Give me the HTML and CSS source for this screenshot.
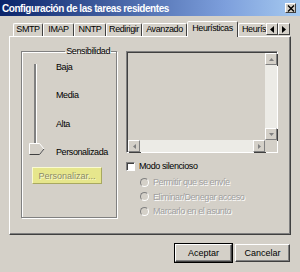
FILE: index.html
```html
<!DOCTYPE html>
<html lang="es">
  <head>
    <meta charset="UTF-8" />
    <title>Configuración de las tareas residentes</title>
    <link rel="stylesheet" href="styles.css">
  </head>
  <body>
    <div class="window">
      <div class="titlebar">
        <span class="title">Configuración de las tareas residentes</span>
        <span class="close">
          <svg width="8" height="7" viewBox="0 0 8 7"><path d="M1 0.5l6 6M7 0.5l-6 6" stroke="#000" stroke-width="1.4"/></svg>
        </span>
      </div>

      <div class="tabs">
        <div class="tab w30">SMTP</div>
        <div class="tab w31">IMAP</div>
        <div class="tab w32">NNTP</div>
        <div class="tab w36">Redirigir</div>
        <div class="tab w45">Avanzado</div>
        <div class="tab active">Heurísticas</div>
        <div class="tab clipped">Heurísticas</div>
        <div class="tab-arrows">
          <span class="arrow-btn"><svg width="4" height="7" viewBox="0 0 4 7"><path d="M4 0v7L0 3.5z" fill="#000"/></svg></span>
          <span class="arrow-btn"><svg width="4" height="7" viewBox="0 0 4 7"><path d="M0 0v7l4-3.5z" fill="#000"/></svg></span>
        </div>
      </div>

      <div class="panel">
        <fieldset class="group">
          <legend>Sensibilidad</legend>
          <div class="slider-row">
            <svg class="slider" width="24" height="92" viewBox="0 0 24 92">
              <rect x="5" y="0" width="2" height="82" fill="#808080"/>
              <rect x="7" y="0" width="1" height="82" fill="#fff"/>
              <path d="M0.5 79.5h10l4.5 5.5-4.5 5.5h-10z" fill="#d4d0c8" stroke="#fff"/>
              <path d="M0.5 90.5h10l4.5-5.5" fill="none" stroke="#404040"/>
            </svg>
            <div class="levels">
              <span>Baja</span>
              <span>Media</span>
              <span>Alta</span>
              <span>Personalizada</span>
            </div>
          </div>
          <button class="custom-btn">Personalizar...</button>
        </fieldset>

        <div class="right">
          <div class="listbox">
            <div class="list-body">
              <div class="list-area"></div>
              <div class="vscroll">
                <span class="sb-btn"><svg width="5" height="3" viewBox="0 0 5 3"><path d="M0 3h5L2.5 0z" fill="#808080"/></svg></span>
                <span class="sb-track"></span>
                <span class="sb-btn"><svg width="5" height="3" viewBox="0 0 5 3"><path d="M0 0h5L2.5 3z" fill="#808080"/></svg></span>
              </div>
            </div>
            <div class="hscroll">
              <span class="sb-btn"><svg width="3" height="5" viewBox="0 0 3 5"><path d="M3 0v5L0 2.5z" fill="#808080"/></svg></span>
              <span class="sb-track"></span>
              <span class="sb-btn"><svg width="3" height="5" viewBox="0 0 3 5"><path d="M0 0v5l3-2.5z" fill="#808080"/></svg></span>
              <span class="corner"></span>
            </div>
          </div>

          <label class="check-row">
            <span class="checkbox"></span>
            Modo silencioso
          </label>
          <div class="radios">
            <div class="radio-row"><span class="radio"></span>Permitir que se envíe</div>
            <div class="radio-row"><span class="radio"></span>Eliminar/Denegar acceso</div>
            <div class="radio-row"><span class="radio"></span>Marcarlo en el asunto</div>
          </div>
        </div>
      </div>

      <div class="footer">
        <button class="btn default">Aceptar</button>
        <button class="btn">Cancelar</button>
      </div>
    </div>
  </body>
</html>
```

FILE: styles.css
```css
* {
  margin: 0;
  padding: 0;
  box-sizing: border-box;
}
body {
  font-family: "Liberation Sans", Arial, sans-serif;
  font-size: 9px;
  letter-spacing: -0.4px;
  color: #000;
  background-color: #d4d0c8;
}
.window {
  width: 300px;
  height: 272px;
  background-color: #d4d0c8;
  overflow: hidden;
}
.titlebar {
  height: 16px;
  display: flex;
  align-items: center;
  justify-content: space-between;
  padding: 0 4px 0 2px;
  background: linear-gradient(90deg, #0a246a, #7d9fdc 75%, #a6caf0);
}
.title {
  color: #fff;
  font-weight: bold;
  font-size: 10px;
  letter-spacing: -0.45px;
}
.close {
  width: 11px;
  height: 10px;
  display: flex;
  align-items: center;
  justify-content: center;
  background-color: #d4d0c8;
  border: 1px solid;
  border-color: #fff #404040 #404040 #fff;
}

/* pestañas */
.tabs {
  height: 20px;
  padding-left: 13px;
  display: flex;
  align-items: flex-end;
  position: relative;
  z-index: 1;
}
.tab {
  height: 13px;
  line-height: 11px;
  text-align: center;
  border: 1px solid;
  border-bottom: none;
  border-color: #fff #404040 transparent #fff;
  border-radius: 2px 2px 0 0;
  white-space: nowrap;
}
.w30 { width: 30px; }
.w31 { width: 31px; }
.w32 { width: 32px; }
.w36 { width: 36px; }
.w45 { width: 45px; }
.tab.active {
  width: 51px;
  height: 16px;
  line-height: 13px;
  margin-bottom: -1px;
  background-color: #d4d0c8;
}
.tab.clipped {
  width: 28px;
  overflow: hidden;
  text-align: left;
  padding-left: 3px;
  border-right: none;
}
.tab-arrows {
  display: flex;
  margin-bottom: 1px;
}
.arrow-btn {
  width: 12px;
  height: 12px;
  display: flex;
  align-items: center;
  justify-content: center;
  background-color: #d4d0c8;
  border: 1px solid;
  border-color: #fff #404040 #404040 #fff;
}

/* panel */
.panel {
  width: 282px;
  height: 199px;
  margin-left: 9px;
  display: flex;
  padding: 9px 0 0 11px;
  border: 1px solid;
  border-color: #fff #404040 #404040 #fff;
  box-shadow: inset -1px -1px 0 #808080;
}
.group {
  width: 96px;
  height: 172px;
  border: 1px solid #808080;
  box-shadow: inset 1px 1px 0 #fff, 1px 1px 0 #fff;
  padding: 5px 0 0 7px;
}
.group legend {
  margin-left: auto;
  margin-right: 5px;
  padding: 0 1px;
  line-height: 11px;
}
.slider-row {
  display: flex;
  height: 95px;
}
.slider {
  margin-top: 2px;
}
.levels {
  display: flex;
  flex-direction: column;
  justify-content: space-between;
  padding: 0 0 0 3px;
  height: 95px;
}
.custom-btn {
  display: block;
  width: 70px;
  height: 17px;
  margin: 10px 0 0 3px;
  font: inherit;
  color: #8a8a6a;
  text-shadow: 1px 1px 0 #fafad0;
  background-color: #e6e68c;
  border: 1px solid;
  border-color: #fafad2 #a8a860 #a8a860 #fafad2;
}

.right {
  margin-left: 9px;
  padding-top: 5px;
}
.listbox {
  width: 152px;
  height: 102px;
  border: 1px solid;
  border-color: #808080 #fff #fff #808080;
  box-shadow: inset 1px 1px 0 #404040;
  display: flex;
  flex-direction: column;
  padding: 1px 0 0 1px;
}
.list-body {
  flex: 1;
  display: flex;
}
.list-area {
  flex: 1;
}
.vscroll {
  width: 12px;
  display: flex;
  flex-direction: column;
}
.hscroll {
  height: 12px;
  display: flex;
}
.sb-btn {
  width: 12px;
  height: 12px;
  flex: none;
  display: flex;
  align-items: center;
  justify-content: center;
  background-color: #d4d0c8;
  border: 1px solid;
  border-color: #fff #808080 #808080 #fff;
  box-shadow: 1px 1px 0 #404040;
}
.sb-track {
  flex: 1;
  background-color: #ecebe6;
}
.corner {
  width: 12px;
  flex: none;
  background-color: #d4d0c8;
}

.check-row {
  display: flex;
  align-items: center;
  margin-top: 8px;
  gap: 4px;
}
.checkbox {
  width: 9px;
  height: 9px;
  background-color: #fff;
  border: 1px solid;
  border-color: #808080 #fff #fff #808080;
  box-shadow: inset 1px 1px 0 #404040;
}
.radios {
  margin: 4px 0 0 14px;
}
.radio-row {
  display: flex;
  align-items: center;
  gap: 4px;
  height: 14.5px;
  color: #a0a0a0;
  text-shadow: 1px 1px 0 #fff;
}
.radio {
  width: 9px;
  height: 9px;
  border-radius: 50%;
  border: 1px solid;
  border-color: #808080 #fff #fff #808080;
}

.footer {
  display: flex;
  justify-content: flex-end;
  gap: 3px;
  padding: 9px 10px 0 0;
}
.btn {
  width: 55px;
  height: 18px;
  font: inherit;
  background-color: #d4d0c8;
  border: 1px solid;
  border-color: #fff #404040 #404040 #fff;
  box-shadow: inset -1px -1px 0 #808080;
}
.btn.default {
  width: 57px;
  outline: 1px solid #000;
  outline-offset: 0;
}
```
